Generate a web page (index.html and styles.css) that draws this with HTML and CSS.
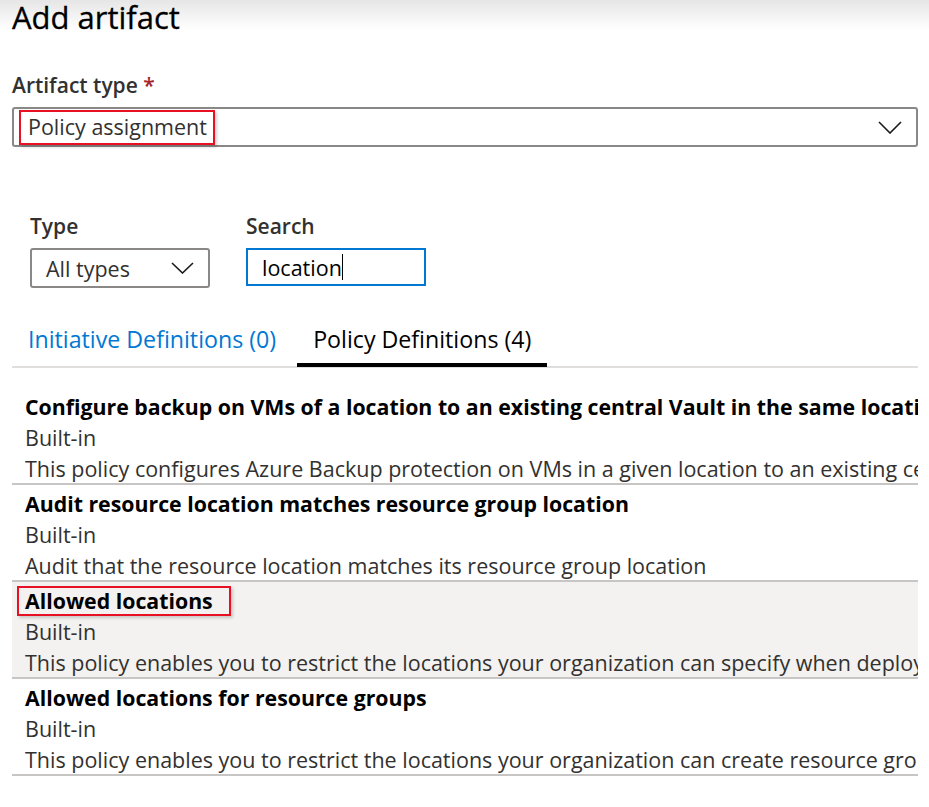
FILE: index.html
```html
<!DOCTYPE html>
<html lang="en">
<head>
<meta charset="utf-8">
<title>Add artifact</title>
<link rel="stylesheet" href="styles.css">
</head>
<body>
<div class="page">
  <h1 class="title">Add artifact</h1>

  <div class="field">
    <div class="label">Artifact type <span class="req">*</span></div>
    <div class="select select-wide">
      <span class="hl hl-select">Policy assignment</span>
      <svg class="chev chev-lg" viewBox="0 0 24 13" width="24" height="13"><path d="M1 1 L12 12 L23 1" fill="none" stroke="#1b1a19" stroke-width="1.6"/></svg>
    </div>
  </div>

  <div class="filters">
    <div class="filter">
      <div class="label">Type</div>
      <div class="select select-small">
        <span>All types</span>
        <svg class="chev" viewBox="0 0 23 12" width="23" height="12"><path d="M1 1 L11.5 11 L22 1" fill="none" stroke="#1b1a19" stroke-width="1.6"/></svg>
      </div>
    </div>
    <div class="filter">
      <div class="label">Search</div>
      <div class="search"><span>location</span><span class="caret"></span></div>
    </div>
  </div>

  <div class="tabs">
    <div class="tab tab-link">Initiative Definitions (0)</div>
    <div class="tab tab-active">Policy Definitions (4)</div>
  </div>

  <div class="list">
    <div class="row">
      <div class="row-title">Configure backup on VMs of a location to an existing central Vault in the same location</div>
      <div class="row-line">Built-in</div>
      <div class="row-line">This policy configures Azure Backup protection on VMs in a given location to an existing central vault in the same location</div>
    </div>
    <div class="row">
      <div class="row-title">Audit resource location matches resource group location</div>
      <div class="row-line">Built-in</div>
      <div class="row-line">Audit that the resource location matches its resource group location</div>
    </div>
    <div class="row row-selected">
      <div class="row-title"><span class="hl hl-row">Allowed locations</span></div>
      <div class="row-line">Built-in</div>
      <div class="row-line">This policy enables you to restrict the locations your organization can specify when deploying resources</div>
    </div>
    <div class="row">
      <div class="row-title">Allowed locations for resource groups</div>
      <div class="row-line">Built-in</div>
      <div class="row-line">This policy enables you to restrict the locations your organization can create resource groups in</div>
    </div>
  </div>
</div>
</body>
</html>
```

FILE: styles.css
```css
* { box-sizing: border-box; }

html, body {
  margin: 0;
  padding: 0;
  background: #ffffff;
}

body {
  font-family: "Open Sans", "Noto Sans", "Liberation Sans", sans-serif;
  color: #323130;
  background: linear-gradient(to bottom, #e6e6e6 0px, #ffffff 30px) no-repeat;
}

.page {
  width: 906px;
  margin-left: 12px;
}

.title {
  margin: 0;
  font-size: 31px;
  line-height: 34px;
  font-weight: 400;
  color: #000000;
  -webkit-text-stroke: 0.3px #000;
}

.field {
  margin-top: 38px;
}

.label {
  font-size: 21px;
  line-height: 26px;
  font-weight: 600;
  color: #323130;
}

.req {
  color: #a4262c;
}

.select {
  display: flex;
  align-items: center;
  justify-content: space-between;
  border: 2px solid #8a8886;
  border-radius: 3px;
  background: #fff;
  font-size: 21.5px;
  color: #323130;
}

.select-wide {
  margin-top: 9px;
  height: 40px;
  padding: 0 14px 0 5px;
}

.select-small {
  margin-top: 9px;
  width: 180px;
  height: 40px;
  padding: 0 14px 0 14px;
}

.chev { display: block; }

.hl {
  display: inline-block;
  border: 2px solid #e81123;
  box-shadow: 2px 2px 3px rgba(0, 0, 0, 0.18);
}

.hl-select {
  padding: 0 6px 1px 7px;
  line-height: 30px;
}

.filters {
  display: flex;
  gap: 36px;
  margin-top: 66px;
  padding-left: 18px;
}

.search {
  margin-top: 9px;
  width: 180px;
  height: 38px;
  border: 2px solid #0078d4;
  padding: 0 14px;
  display: flex;
  align-items: center;
  font-size: 21.5px;
  color: #000;
}

.caret {
  display: inline-block;
  width: 1px;
  height: 26px;
  background: #000;
}

.tabs {
  display: flex;
  margin-top: 36px;
  border-bottom: 2px solid #e1dfdd;
}

.tab {
  font-size: 23.2px;
  line-height: 30px;
  padding: 0 16px 9px 16px;
  border-bottom: 4px solid transparent;
  margin-bottom: -1px;
}

.tab-link {
  color: #0078d4;
  margin-right: 5px;
}

.tab-active {
  color: #000;
  border-bottom-color: #000;
}

.list {
  margin-top: 20px;
}

.row {
  padding: 3px 0 0 13px;
  border-bottom: 2px solid #c8c6c4;
  white-space: nowrap;
  overflow: hidden;
  height: 97px;
}

.row-selected {
  background: #f3f2f1;
}

.row-title,
.row-line {
  font-size: 21.5px;
  line-height: 31px;
  height: 31px;
}

.row-title {
  font-weight: 700;
  color: #000;
  font-size: 21.3px;
}

.row-line {
  color: #323130;
}

.hl-row {
  margin-left: -8px;
  padding: 0 16px 0 6px;
  line-height: 26px;
}
```
